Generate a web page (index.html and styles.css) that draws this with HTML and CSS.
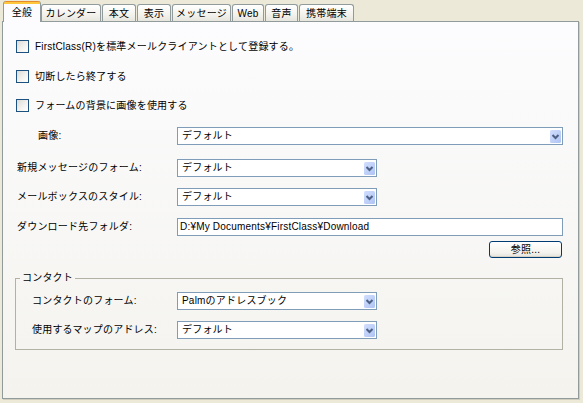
FILE: index.html
```html
<!DOCTYPE html>
<html lang="ja">
<head>
<meta charset="utf-8">
<title>設定</title>
<link rel="stylesheet" href="styles.css">
</head>
<body>
<div class="window">
  <div class="tabs">
    <div class="tab active w-zen">全般</div>
    <div class="tab w-cal">カレンダー</div>
    <div class="tab w-2">本文</div>
    <div class="tab w-2">表示</div>
    <div class="tab w-msg">メッセージ</div>
    <div class="tab w-web">Web</div>
    <div class="tab w-voice">音声</div>
    <div class="tab w-mobile">携帯端末</div>
  </div>
  <div class="panel">
    <div class="check-row first"><span class="cb"></span><span>FirstClass(R)を標準メールクライアントとして登録する。</span></div>
    <div class="check-row"><span class="cb"></span><span>切断したら終了する</span></div>
    <div class="check-row third"><span class="cb"></span><span>フォームの背景に画像を使用する</span></div>

    <div class="field-row row-image">
      <span class="label indent">画像:</span>
      <div class="select wide"><span class="val">デフォルト</span>
        <svg class="arrow" width="11" height="13" viewBox="0 0 11 13"><defs><linearGradient id="ag1" x1="0" y1="0" x2="1" y2="1"><stop offset="0" stop-color="#D2DEFD"/><stop offset="1" stop-color="#AFC4F4"/></linearGradient></defs><rect x="0" y="0" width="11" height="13" rx="1.5" fill="url(#ag1)"/><path d="M2.5 5 L5.5 8 L8.5 5" fill="none" stroke="#4D6185" stroke-width="2"/></svg>
      </div>
    </div>
    <div class="field-row row-new">
      <span class="label">新規メッセージのフォーム:</span>
      <div class="select narrow"><span class="val">デフォルト</span>
        <svg class="arrow" width="11" height="13" viewBox="0 0 11 13"><defs><linearGradient id="ag2" x1="0" y1="0" x2="1" y2="1"><stop offset="0" stop-color="#D2DEFD"/><stop offset="1" stop-color="#AFC4F4"/></linearGradient></defs><rect x="0" y="0" width="11" height="13" rx="1.5" fill="url(#ag2)"/><path d="M2.5 5 L5.5 8 L8.5 5" fill="none" stroke="#4D6185" stroke-width="2"/></svg>
      </div>
    </div>
    <div class="field-row row-mail">
      <span class="label">メールボックスのスタイル:</span>
      <div class="select narrow"><span class="val">デフォルト</span>
        <svg class="arrow" width="11" height="13" viewBox="0 0 11 13"><defs><linearGradient id="ag3" x1="0" y1="0" x2="1" y2="1"><stop offset="0" stop-color="#D2DEFD"/><stop offset="1" stop-color="#AFC4F4"/></linearGradient></defs><rect x="0" y="0" width="11" height="13" rx="1.5" fill="url(#ag3)"/><path d="M2.5 5 L5.5 8 L8.5 5" fill="none" stroke="#4D6185" stroke-width="2"/></svg>
      </div>
    </div>
    <div class="field-row row-dl">
      <span class="label">ダウンロード先フォルダ:</span>
      <div class="textbox wide">D:¥My Documents¥FirstClass¥Download</div>
    </div>
    <div class="button-row">
      <div class="button">参照...</div>
    </div>

    <fieldset class="group">
      <legend>コンタクト</legend>
      <div class="field-row g-first">
        <span class="label g-label">コンタクトのフォーム:</span>
        <div class="select narrow"><span class="val">Palmのアドレスブック</span>
          <svg class="arrow" width="11" height="13" viewBox="0 0 11 13"><defs><linearGradient id="ag4" x1="0" y1="0" x2="1" y2="1"><stop offset="0" stop-color="#D2DEFD"/><stop offset="1" stop-color="#AFC4F4"/></linearGradient></defs><rect x="0" y="0" width="11" height="13" rx="1.5" fill="url(#ag4)"/><path d="M2.5 5 L5.5 8 L8.5 5" fill="none" stroke="#4D6185" stroke-width="2"/></svg>
        </div>
      </div>
      <div class="field-row g-second">
        <span class="label g-label">使用するマップのアドレス:</span>
        <div class="select narrow"><span class="val">デフォルト</span>
          <svg class="arrow" width="11" height="13" viewBox="0 0 11 13"><defs><linearGradient id="ag5" x1="0" y1="0" x2="1" y2="1"><stop offset="0" stop-color="#D2DEFD"/><stop offset="1" stop-color="#AFC4F4"/></linearGradient></defs><rect x="0" y="0" width="11" height="13" rx="1.5" fill="url(#ag5)"/><path d="M2.5 5 L5.5 8 L8.5 5" fill="none" stroke="#4D6185" stroke-width="2"/></svg>
        </div>
      </div>
    </fieldset>
  </div>
</div>
</body>
</html>
```

FILE: styles.css
```css
html, body {
  margin: 0;
  padding: 0;
  background: #ECE9D8;
}

.window {
  width: 583px;
  height: 403px;
  background: #ECE9D8;
  font-family: "Liberation Sans", "Noto Sans CJK JP", sans-serif;
  font-size: 10px;
  line-height: 12px;
  letter-spacing: 0.2px;
  color: #000;
  overflow: hidden;
}

/* ---------- tabs ---------- */
.tabs {
  display: flex;
  align-items: flex-end;
  gap: 1px;
  height: 21px;
  padding-left: 3px;
}

.tab {
  box-sizing: border-box;
  height: 17px;
  border: 1px solid #919B9C;
  border-bottom: none;
  border-radius: 3px 3px 0 0;
  background: linear-gradient(#FFFFFF, #F3F2EC 60%, #E6E5DE);
  display: flex;
  align-items: center;
  justify-content: center;
  padding-top: 1px;
  white-space: nowrap;
}

.tab.active {
  position: relative;
  z-index: 1;
  height: 21px;
  margin-bottom: -1px;
  margin-right: -1px;
  border-top: none;
  border-radius: 3px 3px 0 0;
  background: linear-gradient(#E68B2C 0, #E68B2C 1px, #FFC73C 1px, #FFC73C 3px, #FCFCFE 3px);
  padding-top: 3px;
}

.w-zen { width: 38px; }
.w-cal { width: 60px; }
.w-2 { width: 34px; }
.w-msg { width: 59px; }
.w-web { width: 32px; }
.w-voice { width: 33px; }
.w-mobile { width: 55px; }

/* ---------- panel ---------- */
.panel {
  box-sizing: border-box;
  width: 577px;
  height: 378px;
  margin-left: 2px;
  border: 1px solid #919B9C;
  background: linear-gradient(#FCFCFE, #F4F3EE);
  box-shadow: 1px 1px 0 #D0CEBF;
  display: flex;
  flex-direction: column;
}

/* checkbox rows */
.check-row {
  display: flex;
  align-items: center;
  gap: 6px;
  height: 13px;
  margin-left: 13px;
  margin-top: 17px;
  white-space: nowrap;
}
.check-row.first { margin-top: 18px; }
.check-row.third { margin-top: 16px; }

.cb {
  box-sizing: border-box;
  flex: none;
  width: 13px;
  height: 13px;
  border: 1px solid #1C5180;
  background: linear-gradient(135deg, #DCDCD7, #F5F4F0 60%, #FFFFFF);
}

/* field rows */
.field-row {
  display: flex;
  align-items: center;
  height: 18px;
  margin-left: 14px;
}
.row-image { margin-top: 15px; }
.row-new { margin-top: 14px; }
.row-mail { margin-top: 11px; }
.row-dl { margin-top: 12px; }

.label {
  box-sizing: border-box;
  flex: none;
  width: 160px;
  white-space: nowrap;
}
.label.indent { padding-left: 21px; }

.select,
.textbox {
  box-sizing: border-box;
  flex: none;
  height: 18px;
  border: 1px solid #7F9DB9;
  background: #FFFFFF;
  display: flex;
  align-items: center;
  white-space: nowrap;
}
.select { padding-left: 4px; padding-right: 1px; }
.textbox { padding-left: 2px; }

.select .arrow {
  margin-left: auto;
  flex: none;
  display: block;
}

.wide { width: 386px; }
.narrow { width: 200px; }

.button-row {
  display: flex;
  justify-content: flex-end;
  margin-top: 5px;
  padding-right: 16px;
}

.button {
  box-sizing: border-box;
  width: 73px;
  height: 17px;
  border: 1px solid #003C74;
  border-radius: 3px;
  background: linear-gradient(#FFFFFF, #F4F3EE 70%, #E3E2DA);
  box-shadow: inset 0 -1px 0 #D6D0C5;
  display: flex;
  align-items: center;
  justify-content: center;
}

/* group box */
.group {
  box-sizing: border-box;
  width: 548px;
  margin: 14px 0 0 12px;
  padding: 0 0 10px 0;
  border: 1px solid #B3B1A4;
  border-radius: 0;
  min-inline-size: 0;
}

.group legend {
  margin-left: 4px;
  padding: 0 2px;
  line-height: 12px;
}

.group .field-row { margin-left: 0; }
.g-first { margin-top: 8px; }
.g-second { margin-top: 11px; }

.g-label {
  width: 161px;
  padding-left: 16px;
}
```
